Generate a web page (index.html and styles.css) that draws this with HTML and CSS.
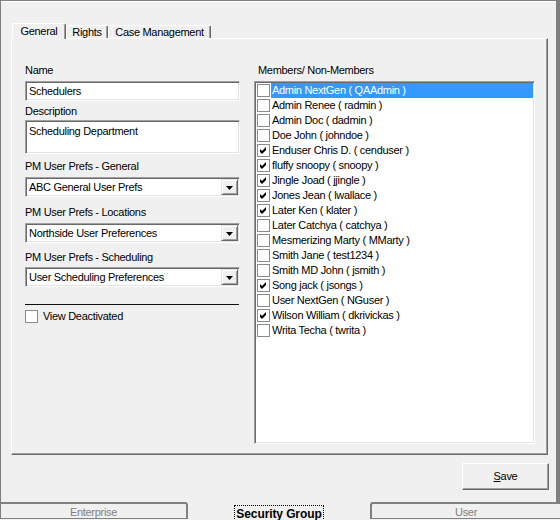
FILE: index.html
```html
<!DOCTYPE html>
<html>
<head>
<meta charset="utf-8">
<link rel="stylesheet" href="styles.css">
</head>
<body>
<div class="window">
  <div class="tabs">
    <div class="tab sel t-gen">General</div>
    <div class="tab t-rights">Rights</div>
    <div class="tab t-case">Case Management</div>
  </div>
  <div class="panel">
    <div class="col-left">
      <div class="lbl">Name</div>
      <div class="field">Schedulers</div>
      <div class="lbl m-desc">Description</div>
      <div class="field area">Scheduling Department</div>
      <div class="lbl m-gen">PM User Prefs - General</div>
      <div class="combo"><span class="ctext">ABC General User Prefs</span><span class="cbtn"><svg width="7" height="4" viewBox="0 0 7 4"><polygon points="0,0 7,0 3.5,4" fill="#000"/></svg></span></div>
      <div class="lbl m-loc">PM User Prefs - Locations</div>
      <div class="combo"><span class="ctext">Northside User Preferences</span><span class="cbtn"><svg width="7" height="4" viewBox="0 0 7 4"><polygon points="0,0 7,0 3.5,4" fill="#000"/></svg></span></div>
      <div class="lbl m-sch">PM User Prefs - Scheduling</div>
      <div class="combo c3"><span class="ctext">User Scheduling Preferences</span><span class="cbtn"><svg width="7" height="4" viewBox="0 0 7 4"><polygon points="0,0 7,0 3.5,4" fill="#000"/></svg></span></div>
      <div class="sep"></div>
      <div class="chkrow"><span class="chk"></span><span class="chklbl">View Deactivated</span></div>
    </div>
    <div class="col-right">
      <div class="lbl mem">Members/ Non-Members</div>
      <div class="list">
        <div class="row sel"><span class="chk"></span><span class="rtext">Admin NextGen ( QAAdmin )</span></div>
        <div class="row"><span class="chk"></span><span class="rtext">Admin Renee ( radmin )</span></div>
        <div class="row"><span class="chk"></span><span class="rtext">Admin Doc ( dadmin )</span></div>
        <div class="row"><span class="chk"></span><span class="rtext">Doe John ( johndoe )</span></div>
        <div class="row"><span class="chk on"><svg width="11" height="11" viewBox="0 0 11 11"><polygon points="2,4 4,6 8,2 8,5 4,9 2,7" fill="#000"/></svg></span><span class="rtext">Enduser Chris D. ( cenduser )</span></div>
        <div class="row"><span class="chk on"><svg width="11" height="11" viewBox="0 0 11 11"><polygon points="2,4 4,6 8,2 8,5 4,9 2,7" fill="#000"/></svg></span><span class="rtext">fluffy snoopy ( snoopy )</span></div>
        <div class="row"><span class="chk on"><svg width="11" height="11" viewBox="0 0 11 11"><polygon points="2,4 4,6 8,2 8,5 4,9 2,7" fill="#000"/></svg></span><span class="rtext">Jingle Joad ( jjingle )</span></div>
        <div class="row"><span class="chk on"><svg width="11" height="11" viewBox="0 0 11 11"><polygon points="2,4 4,6 8,2 8,5 4,9 2,7" fill="#000"/></svg></span><span class="rtext">Jones Jean ( lwallace )</span></div>
        <div class="row"><span class="chk on"><svg width="11" height="11" viewBox="0 0 11 11"><polygon points="2,4 4,6 8,2 8,5 4,9 2,7" fill="#000"/></svg></span><span class="rtext">Later Ken ( klater )</span></div>
        <div class="row"><span class="chk"></span><span class="rtext">Later Catchya ( catchya )</span></div>
        <div class="row"><span class="chk"></span><span class="rtext">Mesmerizing Marty ( MMarty )</span></div>
        <div class="row"><span class="chk"></span><span class="rtext">Smith Jane ( test1234 )</span></div>
        <div class="row"><span class="chk"></span><span class="rtext">Smith MD John ( jsmith )</span></div>
        <div class="row"><span class="chk on"><svg width="11" height="11" viewBox="0 0 11 11"><polygon points="2,4 4,6 8,2 8,5 4,9 2,7" fill="#000"/></svg></span><span class="rtext">Song jack ( jsongs )</span></div>
        <div class="row"><span class="chk"></span><span class="rtext">User NextGen ( NGuser )</span></div>
        <div class="row"><span class="chk on"><svg width="11" height="11" viewBox="0 0 11 11"><polygon points="2,4 4,6 8,2 8,5 4,9 2,7" fill="#000"/></svg></span><span class="rtext">Wilson William ( dkrivickas )</span></div>
        <div class="row"><span class="chk"></span><span class="rtext">Writa Techa ( twrita )</span></div>
      </div>
    </div>
  </div>
  <div class="actions"><div class="btn"><u>S</u>ave</div></div>
</div>
<div class="btabs">
  <div class="btab b-ent">Enterprise</div>
  <div class="btab b-sec"><span class="focus">Security Group</span></div>
  <div class="btab b-user">User</div>
</div>
</body>
</html>
```

FILE: styles.css
```css
html, body {
  margin: 0;
  padding: 0;
}
body {
  width: 560px;
  height: 520px;
  overflow: hidden;
  background: #f0f0f0;
  font-family: "Liberation Sans", Arial, sans-serif;
  font-size: 11px;
  letter-spacing: -0.3px;
  color: #000;
}
.window {
  box-sizing: border-box;
  width: 560px;
  height: 502px;
  border-top: 1px solid #808080;
  border-left: 1px solid #808080;
  border-right: 4px solid #808080;
  box-shadow: inset 0 1px 0 #fff;
  padding: 22px 0 0 10px;
  display: flex;
  flex-direction: column;
}
.tabs {
  display: flex;
  align-items: flex-end;
  height: 15px;
  padding-left: 1px;
  position: relative;
  z-index: 1;
}
.tab {
  box-sizing: border-box;
  height: 13px;
  border-top: 1px solid #fff;
  border-left: 1px solid #fff;
  border-right: 1px solid #696969;
  box-shadow: inset -1px 0 0 #a0a0a0;
  border-radius: 2px 2px 0 0;
  text-align: center;
  line-height: 12px;
  background: #f0f0f0;
  white-space: nowrap;
}
.tab.sel {
  height: 16px;
  margin-bottom: -1px;
  line-height: 15px;
}
.t-gen { width: 54px; }
.t-rights { width: 42px; }
.t-case { width: 103px; }
.panel {
  box-sizing: border-box;
  width: 537px;
  height: 417px;
  border-top: 1px solid #fff;
  border-left: 1px solid #fff;
  border-right: 1px solid #696969;
  border-bottom: 1px solid #696969;
  box-shadow: inset -1px -1px 0 #a0a0a0;
  display: flex;
  padding: 25px 0 0 13px;
}
.col-left {
  width: 215px;
  display: flex;
  flex-direction: column;
}
.col-right {
  margin-left: 14px;
  width: 281px;
  display: flex;
  flex-direction: column;
}
.lbl {
  height: 13px;
  line-height: 13px;
  white-space: nowrap;
}
.m-desc { margin-top: 4px; }
.m-gen { margin-top: 6px; }
.m-loc { margin-top: 9px; }
.m-sch { margin-top: 8px; }
.field {
  box-sizing: border-box;
  height: 20px;
  margin-top: 4px;
  border: 1px solid;
  border-color: #a0a0a0 #fff #fff #a0a0a0;
  box-shadow: inset 1px 1px 0 #696969, inset -1px -1px 0 #e3e3e3;
  background: #fff;
  padding: 2px 0 0 3px;
  line-height: 14px;
}
.field.area {
  height: 34px;
  margin-top: 2px;
  padding-top: 3px;
}
.combo {
  box-sizing: border-box;
  height: 20px;
  margin-top: 4px;
  border: 1px solid;
  border-color: #a0a0a0 #fff #fff #a0a0a0;
  box-shadow: inset 1px 1px 0 #696969, inset -1px -1px 0 #e3e3e3;
  background: #fff;
  padding: 1px;
  display: flex;
}
.combo.c3 { margin-top: 3px; }
.ctext {
  flex: 1;
  padding-left: 2px;
  line-height: 14px;
  padding-top: 1px;
  white-space: nowrap;
}
.cbtn {
  box-sizing: border-box;
  width: 17px;
  height: 16px;
  background: #f0f0f0;
  border-top: 1px solid #e3e3e3;
  border-left: 1px solid #e3e3e3;
  border-right: 1px solid #696969;
  border-bottom: 1px solid #696969;
  box-shadow: inset 1px 1px 0 #fff, inset -1px -1px 0 #a0a0a0;
  display: flex;
  align-items: center;
  justify-content: center;
}
.cbtn svg { display: block; margin-top: 1px; }
.sep {
  margin-top: 17px;
  width: 214px;
  height: 1px;
  background: #101010;
}
.chkrow {
  margin-top: 5px;
  display: flex;
  align-items: center;
  height: 13px;
}
.chklbl {
  margin-left: 5px;
  line-height: 13px;
}
.chk {
  box-sizing: border-box;
  width: 13px;
  height: 13px;
  border: 1px solid #8a8a8a;
  background: #fff;
  flex: none;
  display: flex;
}
.chk svg { display: block; }
.mem { margin-left: 4px; }
.list {
  box-sizing: border-box;
  margin-top: 4px;
  height: 363px;
  border: 1px solid;
  border-color: #a0a0a0 #fff #fff #a0a0a0;
  box-shadow: inset 1px 1px 0 #696969, inset -1px -1px 0 #e3e3e3;
  background: #fff;
  padding: 1px;
}
.row {
  height: 15px;
  display: flex;
  align-items: center;
}
.row .chk { margin-left: 1px; }
.rtext {
  flex: 1;
  margin-left: 1px;
  padding-left: 1px;
  line-height: 15px;
  height: 15px;
  white-space: nowrap;
}
.row.sel .rtext {
  background: #3399ff;
  color: #fff;
}
.actions {
  display: flex;
  justify-content: flex-end;
  margin-top: 8px;
  padding-right: 7px;
}
.btn {
  box-sizing: border-box;
  width: 87px;
  height: 27px;
  border-top: 1px solid #fff;
  border-left: 1px solid #fff;
  border-right: 1px solid #696969;
  border-bottom: 1px solid #696969;
  box-shadow: inset -1px -1px 0 #a0a0a0;
  text-align: center;
  line-height: 25px;
}
.btabs {
  display: flex;
  height: 18px;
  width: 560px;
  overflow: hidden;
}
.btab {
  box-sizing: border-box;
  height: 18px;
  text-align: center;
  color: #808080;
  line-height: 14px;
  padding-top: 1px;
}
.b-ent {
  width: 188px;
  height: 17px;
  border-top: 2px solid #808080;
  border-left: 1px solid #808080;
  border-right: 2px solid #808080;
  border-bottom: 1px solid #808080;
  border-top-right-radius: 3px;
}
.b-sec {
  width: 182px;
  color: #000;
  padding-top: 3px;
}
.focus {
  display: inline-block;
  font-weight: bold;
  font-size: 12px;
  letter-spacing: -0.1px;
  line-height: 16px;
  border: 1px dotted #000;
  padding: 0 1px;
}
.b-user {
  width: 190px;
  height: 17px;
  border-top: 2px solid #808080;
  border-left: 2px solid #808080;
  border-bottom: 1px solid #808080;
  border-top-left-radius: 3px;
}
```
